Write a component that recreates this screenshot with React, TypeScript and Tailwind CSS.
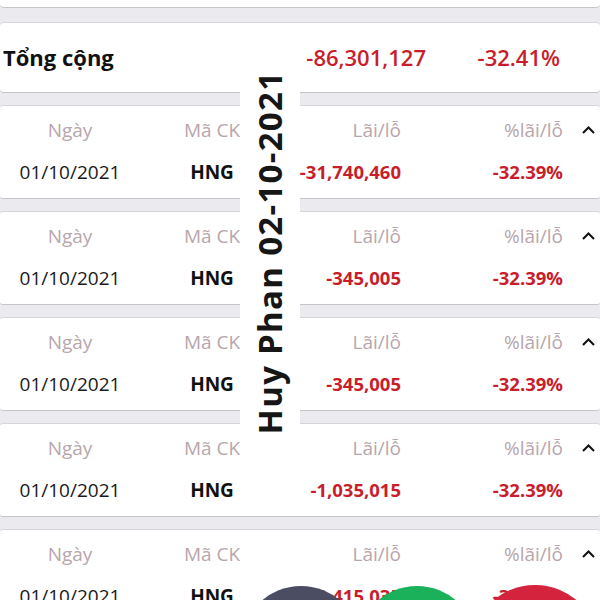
const rows = [
  { date: '01/10/2021', code: 'HNG', pnl: '-31,740,460', pct: '-32.39%' },
  { date: '01/10/2021', code: 'HNG', pnl: '-345,005', pct: '-32.39%' },
  { date: '01/10/2021', code: 'HNG', pnl: '-345,005', pct: '-32.39%' },
  { date: '01/10/2021', code: 'HNG', pnl: '-1,035,015', pct: '-32.39%' },
  { date: '01/10/2021', code: 'HNG', pnl: '-2,415,035', pct: '-32.39%' },
];

function Caret() {
  return (
    <svg width="13" height="8" viewBox="0 0 13 8" className="ml-[19px] shrink-0">
      <polyline points="1,7 6.5,1.5 12,7" fill="none" stroke="#111" strokeWidth="2" />
    </svg>
  );
}

function TradeCard({ date, code, pnl, pct }: (typeof rows)[number]) {
  return (
    <div className="bg-white rounded-[3px] border-t border-b border-t-[#d6d6da] border-b-[#c4c4c9] h-[94px] pt-[11px] flex flex-col gap-[16px] shrink-0">
      <div className="flex items-center h-[26px] text-[19px] text-[#b8a6ab]">
        <div className="w-[140px] text-center">Ngày</div>
        <div className="w-[144px] text-center">Mã CK</div>
        <div className="w-[117px] text-right">Lãi/lỗ</div>
        <div className="w-[162px] text-right">%lãi/lỗ</div>
        <Caret />
      </div>
      <div className="flex items-center h-[26px] text-[19px]">
        <div className="w-[140px] text-center text-[#1a1a1a]">{date}</div>
        <div className="w-[144px] text-center font-bold text-[#111]">{code}</div>
        <div className="w-[117px] text-right text-[18.5px] font-bold text-[#c81e2c]">{pnl}</div>
        <div className="w-[162px] text-right text-[18.5px] font-bold text-[#c81e2c]">{pct}</div>
      </div>
    </div>
  );
}

export default function App() {
  return (
    <div className="relative w-[600px] h-[600px] overflow-hidden bg-[#ebebef] font-['Open_Sans',sans-serif]">
      <div className="flex flex-col">
        <div className="bg-white h-[8px] rounded-b-[4px] border-b border-[#c4c4c9]" />
        <div className="mt-[14px] bg-white h-[71px] rounded-[4px] border-t border-b border-t-[#d6d6da] border-b-[#c4c4c9] flex items-center text-[22px]">
          <div className="w-[284px] pl-[3px] font-bold text-[#111]">Tổng cộng</div>
          <div className="w-[142px] text-right font-semibold text-[#c81e2c]">-86,301,127</div>
          <div className="w-[134px] text-right font-semibold text-[#c81e2c]">-32.41%</div>
        </div>
        <div className="mt-[12px] flex flex-col gap-[12px]">
          {rows.map((r, i) => (
            <TradeCard key={i} {...r} />
          ))}
        </div>
      </div>

      <div className="absolute left-[240px] top-[66px] w-[60px] h-[372px] bg-white flex items-center justify-center">
        <span className="inline-block -rotate-90 whitespace-nowrap text-[33px] leading-none font-bold tracking-[1.3px] text-[#161616]">
          Huy Phan 02-10-2021
        </span>
      </div>

      <div className="absolute left-[241px] top-[586px] w-[120px] h-[120px] rounded-full bg-[#4b4e62]" />
      <div className="absolute left-[357px] top-[586px] w-[120px] h-[120px] rounded-full bg-[#1bb05a]" />
      <div className="absolute left-[470px] top-[585px] w-[130px] h-[130px] rounded-full bg-[#d3233d]" />
    </div>
  );
}
